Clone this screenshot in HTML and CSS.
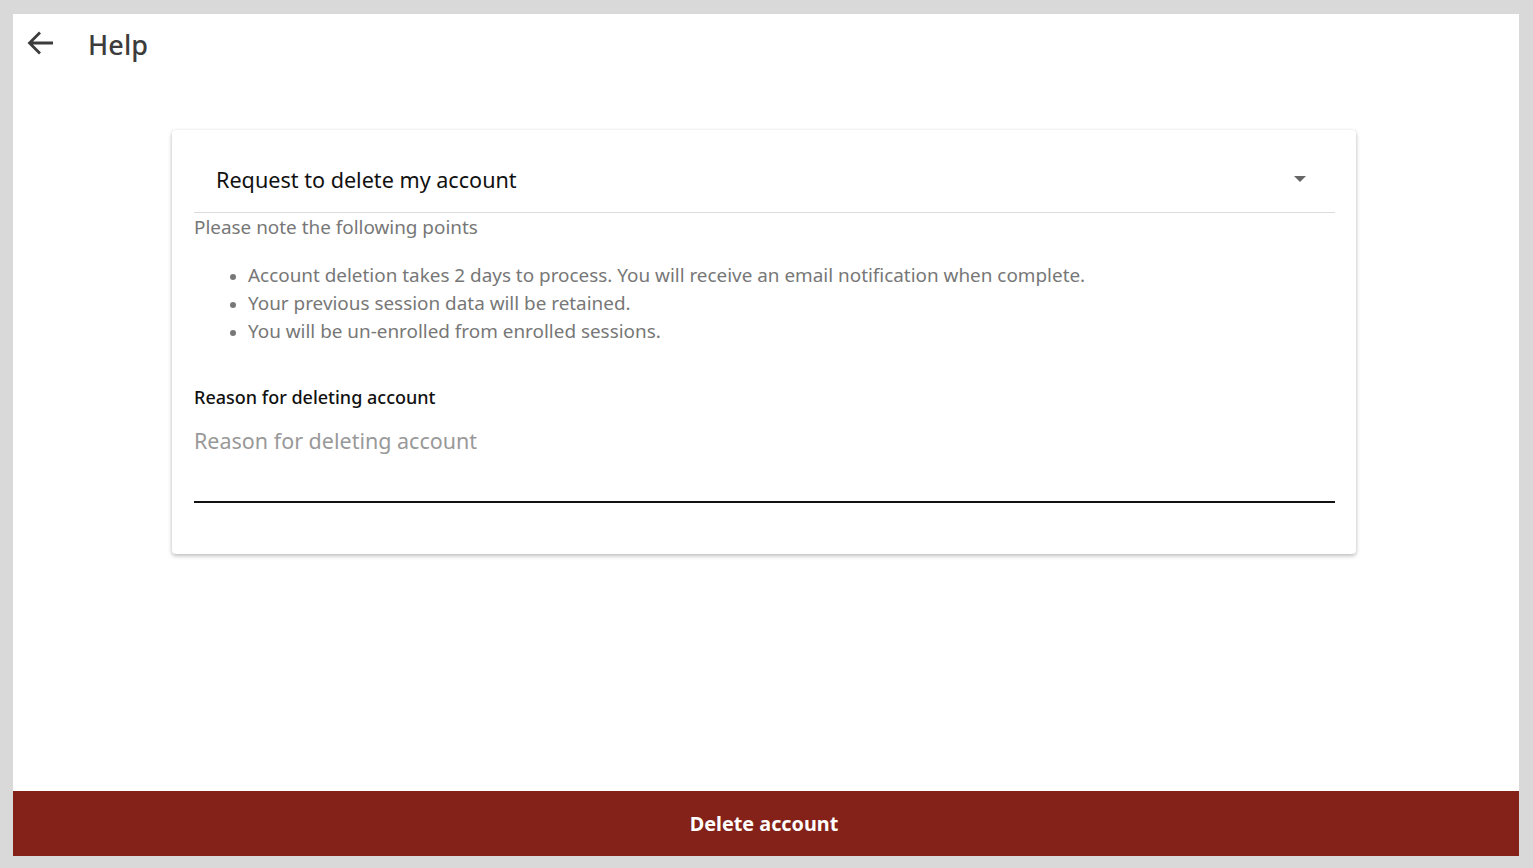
FILE: index.html
```html
<!DOCTYPE html>
<html>
<head>
<meta charset="utf-8">
<link rel="stylesheet" href="styles.css">
</head>
<body>
<div class="frame">
  <header class="topbar">
    <button class="back" aria-label="Back">
      <svg width="28" height="28" viewBox="0 0 28 28"><path d="M27 14H3.5M14 3.5L3.5 14L14 24.5" fill="none" stroke="#3c3c3c" stroke-width="2.8"/></svg>
    </button>
    <h1 class="title">Help</h1>
  </header>
  <main class="content">
    <section class="card">
      <div class="card-head">
        <span class="card-title">Request to delete my account</span>
        <span class="caret"></span>
      </div>
      <p class="note">Please note the following points</p>
      <ul class="points">
        <li>Account deletion takes 2 days to process. You will receive an email notification when complete.</li>
        <li>Your previous session data will be retained.</li>
        <li>You will be un-enrolled from enrolled sessions.</li>
      </ul>
      <label class="field-label">Reason for deleting account</label>
      <div class="field">
        <span class="placeholder">Reason for deleting account</span>
      </div>
    </section>
  </main>
  <button class="delete">Delete account</button>
</div>
</body>
</html>
```
FILE: styles.css
```css
* { box-sizing: border-box; }
html, body { margin: 0; padding: 0; }
body {
  background: #d9d9d9;
  font-family: "Noto Sans", "Open Sans", sans-serif;
  padding: 14px 14px 12px 13px;
  height: 868px;
}
.frame {
  background: #fff;
  height: 842px;
  display: flex;
  flex-direction: column;
}
.topbar {
  display: flex;
  align-items: center;
  height: 60px;
  padding-left: 13px;
}
.back {
  border: 0;
  background: none;
  padding: 0;
  width: 28px;
  height: 28px;
  display: flex;
  align-items: center;
  justify-content: center;
  margin-top: -2px;
}
.title {
  margin: 0 0 0 34px;
  font-size: 27px;
  font-weight: 500;
  color: #3c3c3c;
  letter-spacing: 0.1px;
}
.content {
  flex: 1;
  padding: 56px 163px 0 159px;
}
.card {
  background: #fff;
  border-radius: 4px;
  box-shadow: 0 2px 4px rgba(0,0,0,0.25), 0 0 3px rgba(0,0,0,0.06);
  padding: 0 21px 51px 22px;
}
.card-head {
  display: flex;
  align-items: center;
  justify-content: space-between;
  height: 83px;
  padding: 16px 29px 0 22px;
  border-bottom: 1px solid #dcdcdc;
}
.card-title {
  font-size: 21.6px;
  color: #111;
}
.caret {
  width: 0;
  height: 0;
  border-left: 6px solid transparent;
  border-right: 6px solid transparent;
  border-top: 6px solid #666;
  margin-top: 0;
}
.note {
  margin: 1px 0 0;
  font-size: 18.9px;
  line-height: 26px;
  color: #777;
}
.points {
  margin: 21px 0 0;
  padding-left: 54px;
  font-size: 18.9px;
  line-height: 28px;
  color: #777;
}
.points li::marker { font-size: 16px; }
.field-label {
  display: block;
  margin-top: 39px;
  font-size: 18px;
  font-weight: 500;
  color: #111;
  line-height: 26px;
}
.field {
  margin-top: 17px;
  height: 76px;
  border-bottom: 2px solid #111;
}
.placeholder {
  font-size: 21.5px;
  color: #999;
  line-height: 28px;
}
.delete {
  height: 65px;
  width: 100%;
  border: 0;
  background: #842219;
  color: #fff;
  font-family: "Noto Sans", "Open Sans", sans-serif;
  font-size: 19.8px;
  font-weight: 700;
  padding: 0 4px 0 0;
}
```
